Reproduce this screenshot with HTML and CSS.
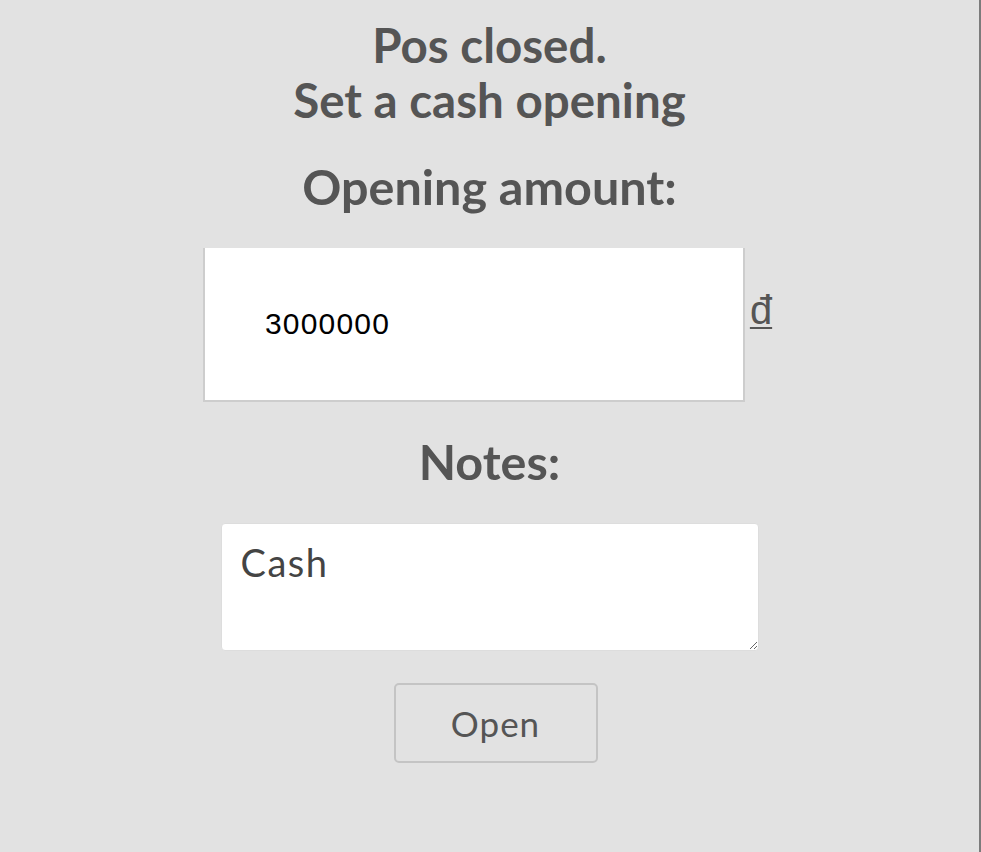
FILE: index.html
```html
<!DOCTYPE html>
<html lang="en">
<head>
<meta charset="utf-8">
<title>Pos closed</title>
<link rel="stylesheet" href="styles.css">
</head>
<body>
<div class="page">
  <main class="panel">
    <h1 class="title">Pos closed.<br>Set a cash opening</h1>
    <h2 class="label">Opening amount:</h2>
    <div class="amount-row">
      <input class="amount" type="text" value="3000000">
      <span class="currency">đ</span>
    </div>
    <h2 class="label">Notes:</h2>
    <textarea class="notes">Cash</textarea>
    <button class="open-btn" type="button">Open</button>
  </main>
</div>
</body>
</html>
```

FILE: styles.css
```css
html, body {
  margin: 0;
  padding: 0;
  background: #e2e2e2;
}

.page {
  box-sizing: border-box;
  width: 100%;
  min-height: 100vh;
  border-right: 2px solid #7b7b7b;
  background: #e2e2e2;
}

.panel {
  display: flex;
  flex-direction: column;
  align-items: center;
  gap: 32px;
  padding-top: 17px;
  font-family: "Lato", "Liberation Sans", sans-serif;
  color: #555555;
}

.title,
.label {
  margin: 0;
  font-size: 47.5px;
  line-height: 55px;
  font-weight: 700;
  text-align: center;
  color: #555555;
}

.label {
  font-size: 48.5px;
}

.amount-row {
  display: flex;
  align-items: flex-start;
  gap: 5px;
  margin-top: 2px;
}

.amount {
  box-sizing: border-box;
  width: 542px;
  height: 154px;
  margin: 0;
  padding: 0 0 0 60px;
  border: 2px solid #cdcdcd;
  border-top: 0;
  background: #ffffff;
  font-family: "Liberation Sans", Arial, sans-serif;
  font-size: 30px;
  letter-spacing: 1.2px;
  color: #000000;
  outline: none;
}

.currency {
  margin-top: 42px;
  margin-right: 4px;
  font-family: "Liberation Sans", Arial, sans-serif;
  font-size: 40px;
  line-height: 40px;
  color: #555555;
  text-decoration: underline;
  text-decoration-thickness: 2px;
  text-underline-offset: 3px;
}

.notes {
  box-sizing: border-box;
  display: block;
  width: 538px;
  height: 128px;
  margin: 2px 0 0 0;
  padding: 16px 19px;
  border: 1px solid #dddddd;
  border-radius: 4px;
  background: #ffffff;
  font-family: "Lato", sans-serif;
  font-size: 38px;
  letter-spacing: 1.5px;
  line-height: 1.2;
  color: #444444;
  outline: none;
}

.open-btn {
  box-sizing: border-box;
  width: 204px;
  height: 80px;
  margin: 0 0 0 12px;
  padding: 0;
  border: 2px solid #c4c4c4;
  border-radius: 5px;
  background: transparent;
  font-family: "Lato", sans-serif;
  font-size: 35px;
  letter-spacing: 1px;
  color: #555555;
  cursor: pointer;
}
```
